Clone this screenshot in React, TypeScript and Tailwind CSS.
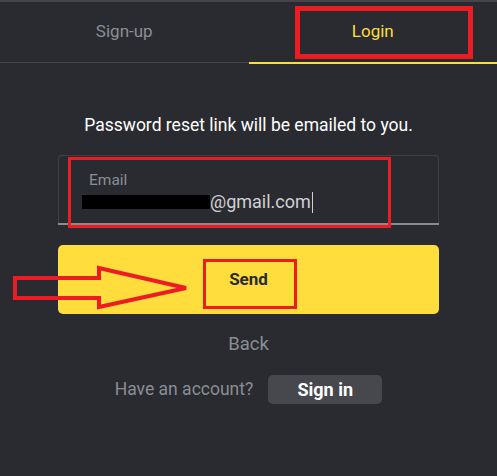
export default function App() {
  return (
    <div className="relative w-full h-[476px] overflow-hidden bg-[#2a2b30] font-['Roboto',sans-serif] border-t-2 border-[#44454a]">
      {/* tabs */}
      <div className="flex h-[61px] border-b border-[#44454a]">
        <div className="flex-1 flex items-center justify-center text-[17px] text-[#8b8e94]">Sign-up</div>
        <div className="flex-1 flex items-center justify-center text-[17px] text-[#ffdd3c] relative">
          Login
          <div className="absolute left-0 right-0 -bottom-[2px] h-[2px] bg-[#ffdd3c]" />
        </div>
      </div>

      <div className="flex flex-col items-center px-[58px]">
        <p className="mt-[50px] text-[17.5px] leading-[24px] text-white">Password reset link will be emailed to you.</p>

        <div className="mt-[18px] w-full h-[70px] rounded-t-[4px] border border-b-0 border-[#3f4045] relative flex flex-col px-[30px] pt-[14px]">
          <span className="text-[15.5px] leading-[20px] text-[#8b8e94]">Email</span>
          <div className="flex items-center text-[18px] leading-[24px] text-[#d0d1d4]">
            <span className="inline-block w-[121px]" />
            <span>@gmail.com</span>
            <span className="w-px h-[21px] bg-[#d0d1d4] ml-[1px]" />
          </div>
          <div className="absolute left-[23px] top-[39px] w-[128px] h-[14px] bg-black" />
          <div className="absolute -left-px -right-px bottom-0 h-[2px] bg-[#8a8b8f]" />
        </div>

        <button className="mt-[20px] w-full h-[69px] rounded-[5px] bg-[#ffdd3c] text-[17px] font-bold text-[#2a2b30]">
          Send
        </button>

        <span className="mt-[18px] text-[18.5px] leading-[24px] text-[#8b8e94]">Back</span>

        <div className="mt-[19px] flex items-center gap-[15px]">
          <span className="text-[17.5px] text-[#8b8e94]">Have an account?</span>
          <button className="w-[114px] h-[29px] rounded-[5px] bg-[#47484d] text-[18px] font-bold text-white">Sign in</button>
        </div>
      </div>

      {/* red annotations */}
      <div className="absolute left-[295px] top-[4px] w-[178px] h-[53px] border-[5px] border-[#ed1c24]" />
      <div className="absolute left-[68px] top-[155px] w-[323px] h-[71px] border-[3px] border-[#ed1c24]" />
      <div className="absolute left-[203px] top-[257px] w-[94px] h-[50px] border-[3px] border-[#ed1c24]" />
      <svg className="absolute left-0 top-0" width="497" height="476" viewBox="0 0 497 476">
        <polygon
          points="15,276 99,276 99,266 186,286 99,305 99,296 15,296"
          fill="none"
          stroke="#ed1c24"
          strokeWidth="4"
          strokeLinejoin="miter"
        />
      </svg>
    </div>
  )
}
